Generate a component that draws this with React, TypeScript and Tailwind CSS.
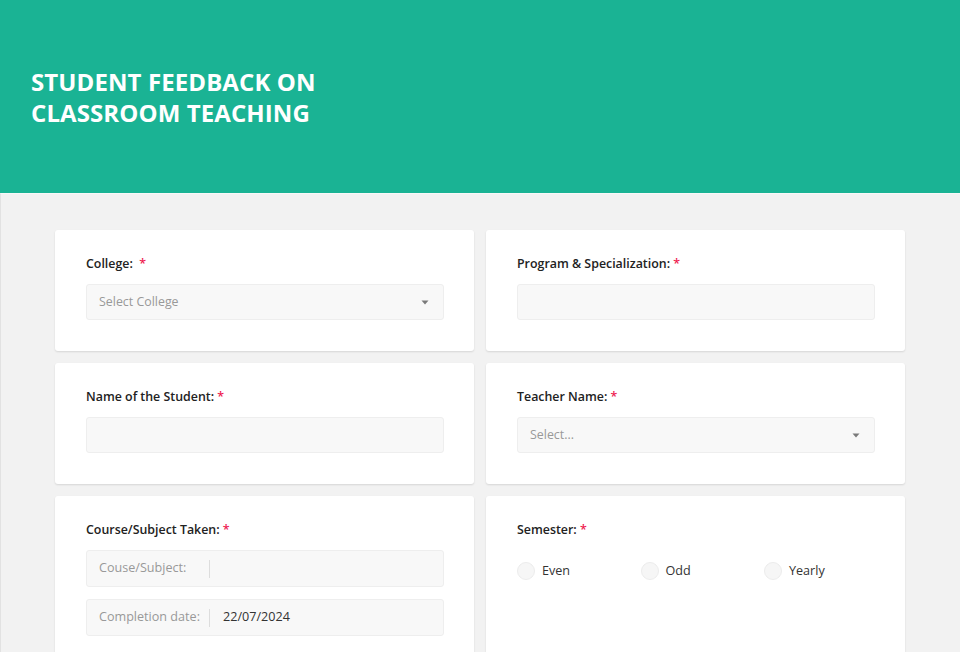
import type { ReactNode } from 'react';

const font = { fontFamily: '"Open Sans", "Noto Sans", sans-serif' };

const Label = ({ children, gap = false }: { children: ReactNode; gap?: boolean }) => (
    <div className="text-[12.4px] leading-[19px] font-semibold text-[#222] mb-[11px]">
        {children}
        {gap ? '\u00a0 ' : ' '}
        <span className="text-[#ee1a4f]">*</span>
    </div>
);

const Caret = () => (
    <svg width="8" height="5" viewBox="0 0 8 5" className="ml-auto">
        <path d="M0.5 0.5 L7.5 0.5 L4 4.5 Z" fill="#7a7a7a" />
    </svg>
);

const Select = ({ placeholder }: { placeholder: string }) => (
    <div className="h-9 flex items-center pl-3 pr-[14px] bg-[#f8f8f8] border border-[#eeeeee] rounded-[3px] text-[12.4px] text-[#999]">
        {placeholder}
        <Caret />
    </div>
);

const Input = () => <div className="h-9 bg-[#f8f8f8] border border-[#eeeeee] rounded-[3px]" />;

const PrefixInput = ({ prefix, value }: { prefix: string; value?: string }) => (
    <div className="h-[37px] flex items-center pl-3 bg-[#f8f8f8] border border-[#eeeeee] rounded-[3px] text-[12.6px]">
        <span className="w-[110px] text-[#999]">{prefix}</span>
        <span className="h-[18px] w-px bg-[#dddddd]" />
        <span className="pl-[13px] text-[#333]">{value}</span>
    </div>
);

const Card = ({ children }: { children: ReactNode }) => (
    <div className="bg-white rounded-[3px] shadow-[0_1px_2px_rgba(0,0,0,0.12)] pt-6 pb-[31px] pl-[31px] pr-[30px]">
        {children}
    </div>
);

const Radio = ({ label }: { label: string }) => (
    <label className="w-[123.5px] shrink-0 flex items-center gap-[7px] text-[12.6px] text-[#333]">
        <span className="w-[18px] h-[18px] rounded-full bg-[#f6f6f6] border border-[#ececec]" />
        {label}
    </label>
);

export default function App() {
    return (
        <div style={font} className="min-h-screen bg-[#f2f2f2]">
            <header className="h-[193px] bg-[#1ab394] pl-[31px] pt-[66px]">
                <h1 className="text-white text-[24px] leading-[31px] font-bold tracking-[0.1px]">
                    STUDENT FEEDBACK ON
                    <br />
                    CLASSROOM TEACHING
                </h1>
            </header>

            <main className="border-t border-l border-t-[#f8f8f8] border-l-[#e2e2e2] pt-9 pb-10">
                <div className="w-[850px] ml-[54px] grid grid-cols-2 gap-3">
                    <Card>
                        <Label gap>College:</Label>
                        <Select placeholder="Select College" />
                    </Card>
                    <Card>
                        <Label>Program &amp; Specialization:</Label>
                        <Input />
                    </Card>

                    <Card>
                        <Label>Name of the Student:</Label>
                        <Input />
                    </Card>
                    <Card>
                        <Label>Teacher Name:</Label>
                        <Select placeholder="Select..." />
                    </Card>

                    <Card>
                        <Label>Course/Subject Taken:</Label>
                        <div className="flex flex-col gap-3">
                            <PrefixInput prefix="Couse/Subject:" />
                            <PrefixInput prefix="Completion date:" value="22/07/2024" />
                        </div>
                    </Card>
                    <Card>
                        <Label>Semester:</Label>
                        <div className="flex pt-[12px]">
                            <Radio label="Even" />
                            <Radio label="Odd" />
                            <Radio label="Yearly" />
                        </div>
                    </Card>
                </div>
            </main>
        </div>
    );
}
